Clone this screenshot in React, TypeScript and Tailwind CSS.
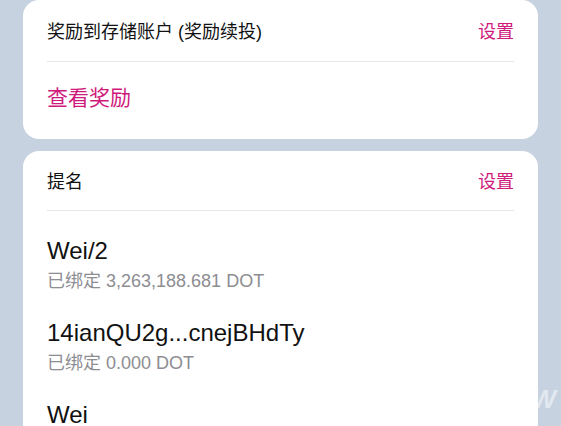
const FONT = '[font-family:"Liberation_Sans","Noto_Sans_CJK_SC",sans-serif]';

const nominations = [
  { name: 'Wei/2', bonded: '3,263,188.681' },
  { name: '14ianQU2g...cnejBHdTy', bonded: '0.000' },
  { name: 'Wei', bonded: '' },
];

export default function App() {
  return (
    <div className={`relative h-[426px] w-[561px] overflow-hidden bg-[#c6d2df] px-[23px] ${FONT}`}>
      {/* 奖励 */}
      <div className="rounded-2xl bg-white">
        <div className="mx-6 flex h-[62px] items-center justify-between border-b border-[#e6e6e8] pt-[4px]">
          <span className="text-[18px] text-[#111]">奖励到存储账户 (奖励续投)</span>
          <span className="text-[18px] text-[#cf1a7c]">设置</span>
        </div>
        <div className="mx-6 pb-[27px] pt-[22px]">
          <span className="text-[21px] leading-[28px] text-[#cf1a7c]">查看奖励</span>
        </div>
      </div>

      {/* 提名 */}
      <div className="mt-3 rounded-2xl bg-white">
        <div className="mx-6 flex h-[60px] items-center justify-between border-b border-[#e6e6e8] pt-[4px]">
          <span className="text-[18px] text-[#111]">提名</span>
          <span className="text-[18px] text-[#cf1a7c]">设置</span>
        </div>
        <div className="mx-6 pt-3">
          {nominations.map((n, i) => (
            <div key={i} className="py-3">
              <p className="text-[24px] leading-[32px] text-[#111]">{n.name}</p>
              {n.bonded && (
                <p className="mt-[2px] text-[18px] leading-[24px] text-[#8d8d92]">已绑定 {n.bonded} DOT</p>
              )}
            </div>
          ))}
        </div>
      </div>

      {/* watermark */}
      <span className="absolute right-[5px] top-[386px] text-[26px] font-bold italic leading-[26px] text-white/50">W</span>
    </div>
  );
}
